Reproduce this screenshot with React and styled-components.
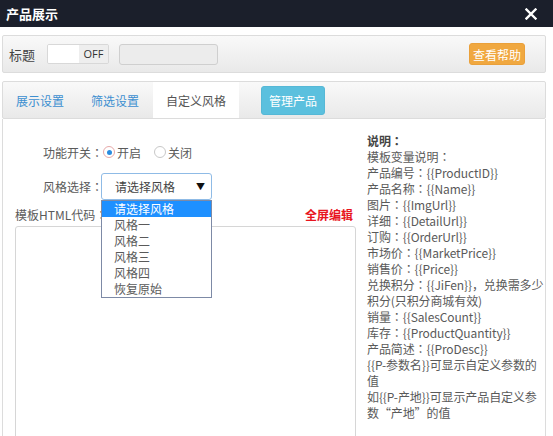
import React from 'react'
import styled, { createGlobalStyle } from 'styled-components'

const GlobalStyle = createGlobalStyle`
  html, body {
    margin: 0;
    padding: 0;
    background: #fff;
    font-family: "Noto Sans CJK SC", "Noto Sans", sans-serif;
    font-size: 12px;
    color: #5a5a5a;
    overflow: hidden;
  }
`

const Page = styled.div`
  width: 553px;
  height: 436px;
  background: #fff;
  overflow: hidden;
`

const TitleBar = styled.div`
  height: 27px;
  background: #1b1f2b;
  display: flex;
  align-items: center;
  justify-content: space-between;
  padding: 0 16px 0 6px;
  color: #fff;
`

const Title = styled.span`
  font-size: 13px;
  font-weight: bold;
`

const Body = styled.div`
  padding: 8px 7px 0 2px;
`

const Bar = styled.div`
  height: ${p => p.h}px;
  box-sizing: border-box;
  border: 1px solid #dcdcdc;
  border-radius: 2px;
  background: linear-gradient(#f9f9f9, #e9e9e9);
  display: flex;
  align-items: ${p => p.stretch ? 'stretch' : 'center'};
  margin-bottom: ${p => p.mb || 0}px;
  padding: ${p => p.pad || '0'};
`

const BarLabel = styled.span`
  font-size: 13px;
  color: #444;
  margin-right: 12px;
`

const Toggle = styled.div`
  display: flex;
  height: 18px;
  border: 1px solid #d8d8d8;
  border-radius: 2px;
  overflow: hidden;
  margin-right: 10px;
`

const ToggleHalf = styled.span`
  width: ${p => p.w}px;
  background: ${p => p.off ? '#eeeeee' : '#fff'};
  color: #333;
  font-family: "Open Sans", "Noto Sans", sans-serif;
  font-size: 11px;
  line-height: 18px;
  text-align: center;
`

const TextInput = styled.div`
  width: 97px;
  height: 19px;
  border: 1px solid #cfcfcf;
  border-radius: 3px;
  background: #ececec;
`

const Spacer = styled.div`
  flex: 1;
`

const Btn = styled.span`
  display: inline-flex;
  align-items: center;
  justify-content: center;
  background: ${p => p.bg};
  color: #fff;
  border-radius: 3px;
  font-size: 12px;
  height: ${p => p.h}px;
  padding: 0 ${p => p.px}px;
  border: 1px solid ${p => p.bd};
`

const Tab = styled.div`
  display: flex;
  align-items: center;
  padding: 0 ${p => p.px}px;
  background: ${p => p.active ? '#fff' : 'transparent'};
  color: ${p => p.active ? '#555' : '#3d8fd0'};
  font-size: 12px;
`

const TabBtnWrap = styled.div`
  display: flex;
  align-items: center;
  padding-left: 22px;
`

const Content = styled.div`
  display: flex;
  border-left: 1px solid #dcdcdc;
  border-right: 1px solid #dcdcdc;
  height: 330px;
`

const LeftCol = styled.div`
  width: 342px;
  flex-shrink: 0;
  padding: 25px 0 0 12px;
`

const FormRow = styled.div`
  display: flex;
  align-items: center;
  height: ${p => p.h}px;
  margin-bottom: ${p => p.mb || 0}px;
`

const FieldLabel = styled.span`
  width: 88px;
  text-align: right;
  flex-shrink: 0;
`

const Colon = styled.span`
  font-family: "Noto Sans CJK TC", "Noto Sans CJK SC", sans-serif;
`

const Radio = styled.span`
  width: 12px;
  height: 12px;
  border-radius: 50%;
  box-sizing: border-box;
  border: 1px solid ${p => p.on ? '#e7a9a9' : '#c8c8c8'};
  display: inline-flex;
  align-items: center;
  justify-content: center;
  margin: 0 2px 0 ${p => p.ml}px;
  background: #fff;
  &::after {
    content: '';
    display: ${p => p.on ? 'block' : 'none'};
    width: 5px;
    height: 5px;
    border-radius: 50%;
    background: #2a8ce0;
  }
`

const SelectWrap = styled.div`
  position: relative;
  margin-left: -2px;
`

const SelectBox = styled.div`
  width: 111px;
  height: 27px;
  box-sizing: border-box;
  border: 1px solid #8fbbe6;
  border-radius: 3px;
  display: flex;
  align-items: center;
  justify-content: space-between;
  padding: 0 6px 0 13px;
  color: #444;
  background: #fff;
`

const Arrow = styled.span`
  font-size: 9px;
  color: #111;
`

const Menu = styled.ul`
  position: absolute;
  top: 27px;
  left: 0;
  width: 111px;
  box-sizing: border-box;
  margin: 0;
  padding: 0;
  list-style: none;
  border: 1px solid #7d8aa6;
  background: #fff;
  z-index: 2;
`

const MenuItem = styled.li`
  height: 16px;
  line-height: 16px;
  padding-left: 12px;
  font-size: 12px;
  background: ${p => p.sel ? '#1e90ff' : '#fff'};
  color: ${p => p.sel ? '#fff' : '#5a5a5a'};
`

const CodeHead = styled.div`
  display: flex;
  justify-content: space-between;
  align-items: center;
  height: 16px;
  padding-right: 4px;
  margin-top: 6px;
`

const FullEdit = styled.span`
  color: #e8141e;
  font-weight: bold;
`

const CodeArea = styled.div`
  margin-top: 4px;
  width: 341px;
  height: 240px;
  box-sizing: border-box;
  border: 1px solid #d6d6d6;
  border-radius: 3px;
  background: #fff;
`

const RightCol = styled.div`
  flex: 1;
  min-width: 0;
  padding: 14px 0 0 10px;
  line-height: 16px;
  letter-spacing: -0.1px;
`

const NoteTitle = styled.div`
  font-weight: bold;
  color: #444;
`

const Line = styled.div``

const notes = [
  '模板变量说明：',
  '产品编号：{{ProductID}}',
  '产品名称：{{Name}}',
  '图片：{{ImgUrl}}',
  '详细：{{DetailUrl}}',
  '订购：{{OrderUrl}}',
  '市场价：{{MarketPrice}}',
  '销售价：{{Price}}',
  '兑换积分：{{JiFen}}，兑换需多少积分(只积分商城有效)',
  '销量：{{SalesCount}}',
  '库存：{{ProductQuantity}}',
  '产品简述：{{ProDesc}}',
  '{{P-参数名}}可显示自定义参数的值',
  '如{{P-产地}}可显示产品自定义参数“产地”的值',
]

const styles = ['请选择风格', '风格一', '风格二', '风格三', '风格四', '恢复原始']

// full-width colon drawn centred, as the reference font does
function withColon(text) {
  const parts = text.split('：')
  return parts.map((part, i) => (
    <React.Fragment key={i}>
      {part}
      {i < parts.length - 1 && <Colon>：</Colon>}
    </React.Fragment>
  ))
}

export default function App() {
  return (
    <Page>
      <GlobalStyle />
      <TitleBar>
        <Title>产品展示</Title>
        <svg width="12" height="12" viewBox="0 0 12 12">
          <path d="M1.5 1.5 L10.5 10.5 M10.5 1.5 L1.5 10.5" stroke="#fff" strokeWidth="2.4" strokeLinecap="square" />
        </svg>
      </TitleBar>
      <Body>
        <Bar h={38} mb={8} pad="0 20px 0 6px">
          <BarLabel>标题</BarLabel>
          <Toggle>
            <ToggleHalf w={31} />
            <ToggleHalf w={29} off>OFF</ToggleHalf>
          </Toggle>
          <TextInput />
          <Spacer />
          <Btn bg="#f0a840" bd="#eaa03a" h={20} px={3}>查看帮助</Btn>
        </Bar>
        <Bar h={38} stretch>
          <Tab px={13}>展示设置</Tab>
          <Tab px={14}>筛选设置</Tab>
          <Tab px={13} active>自定义风格</Tab>
          <TabBtnWrap>
            <Btn bg="#5bc0de" bd="#56b8d6" h={27} px={7}>管理产品</Btn>
          </TabBtnWrap>
        </Bar>
        <Content>
          <LeftCol>
            <FormRow h={16} mb={13}>
              <FieldLabel>{withColon('功能开关：')}</FieldLabel>
              <Radio on ml={0} />
              <span>开启</span>
              <Radio ml={13} />
              <span>关闭</span>
            </FormRow>
            <FormRow h={27}>
              <FieldLabel>{withColon('风格选择：')}</FieldLabel>
              <SelectWrap>
                <SelectBox>
                  <span>请选择风格</span>
                  <Arrow>▼</Arrow>
                </SelectBox>
                <Menu>
                  {styles.map((s, i) => (
                    <MenuItem key={s} sel={i === 0}>{s}</MenuItem>
                  ))}
                </Menu>
              </SelectWrap>
            </FormRow>
            <CodeHead>
              <span>{withColon('模板HTML代码：')}</span>
              <FullEdit>全屏编辑</FullEdit>
            </CodeHead>
            <CodeArea />
          </LeftCol>
          <RightCol>
            <NoteTitle>{withColon('说明：')}</NoteTitle>
            {notes.map(n => <Line key={n}>{withColon(n)}</Line>)}
          </RightCol>
        </Content>
      </Body>
    </Page>
  )
}
